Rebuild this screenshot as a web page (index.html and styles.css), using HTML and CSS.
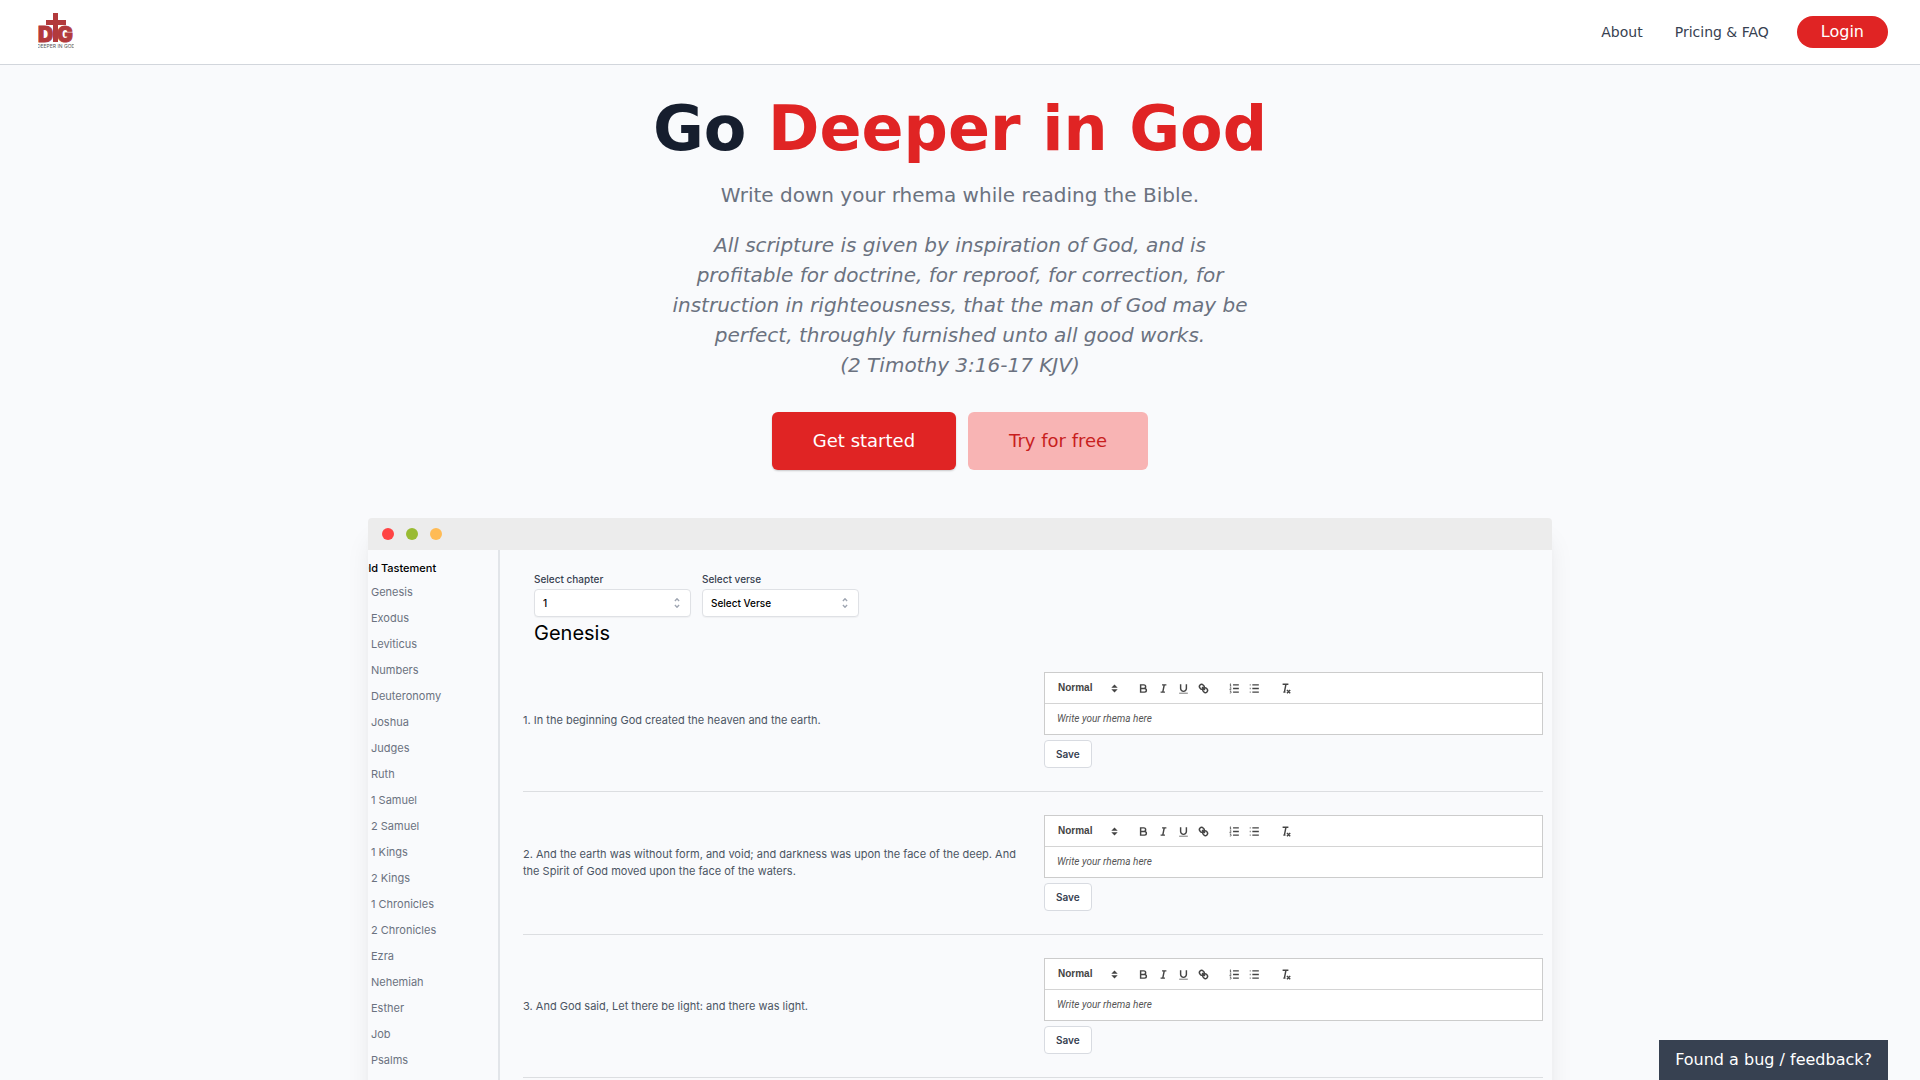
FILE: index.html
```html
<!DOCTYPE html>
<html lang="en">
<head>
<meta charset="utf-8">
<meta name="viewport" content="width=device-width, initial-scale=1">
<title>Deeper in God</title>
<link rel="stylesheet" href="styles.css">
</head>
<body>
<svg class="sprite" aria-hidden="true">
  <symbol id="i-bold" viewBox="0 0 18 18"><path d="M5 4h4.500a2.500 2.500 0 0 1 0 5H5zM5 9h5.500a2.500 2.500 0 0 1 0 5H5z"/></symbol>
  <symbol id="i-italic" viewBox="0 0 18 18"><path d="M7 4h6M5 14h6M8 14l2-10"/></symbol>
  <symbol id="i-underline" viewBox="0 0 18 18"><path d="M5 3v6c0 2 1.800 4 4 4s4-2 4-4V3"/><path d="M3 15.500h12" stroke-width="1"/></symbol>
  <symbol id="i-link" viewBox="0 0 18 18"><path d="M7 7l4 4"/><path d="M8.900 4.577a3.476 3.476 0 0 1 .360 4.679A3.476 3.476 0 0 1 4.577 8.900C3.185 7.500 2.035 6.400 4.217 4.217S7.500 3.185 8.900 4.577z"/><path d="M13.423 9.100a3.476 3.476 0 0 0-4.679-.360 3.476 3.476 0 0 0 .360 4.679c1.392 1.392 2.500 2.542 4.679.360S14.815 10.500 13.423 9.100z"/></symbol>
  <symbol id="i-ol" viewBox="0 0 18 18"><path d="M7 4h8M7 9h8M7 14h8"/><path stroke-width="1" d="M2.500 5.500h2M3.500 5.500v-3l-1 .600M2.500 8.200c.700-1 2-.600 1.800.200L2.500 10.500h2M2.500 12.500h1.800l-.800 1.200c1.500 0 1.300 1.800-1 1.600"/></symbol>
  <symbol id="i-ul" viewBox="0 0 18 18"><path d="M6 4h9M6 9h9M6 14h9M2.500 4h1M2.500 9h1M2.500 14h1"/></symbol>
  <symbol id="i-clean" viewBox="0 0 18 18"><path d="M5 3h8M6 14h3M9.500 3.500L7.500 14M11 11l4.500 4.500M15.500 11L11 15.500"/></symbol>
  <symbol id="i-sort" viewBox="0 0 18 18"><path class="solid" d="M7 11l2 2 2-2zM7 7l2-2 2 2z"/></symbol>
  <symbol id="i-chevrons" viewBox="0 0 20 20"><path d="M7 7l3-3 3 3M7 13l3 3 3-3"/></symbol>
</svg>

<header class="site-header">
  <a class="logo" href="#" aria-label="Deeper in God">
    <svg width="36" height="38" viewBox="0 0 36 38">
      <g class="logo-mark">
        <text x="0" y="31">D</text>
        <text x="19" y="31">G</text>
        <path d="M15 2h5v7h8v5h-8v17h-5V14H8V9h7z"/>
      </g>
      <text class="logo-name" x="18" y="37" text-anchor="middle">DEEPER IN GOD</text>
    </svg>
  </a>
  <nav class="site-nav">
    <a href="#">About</a>
    <a href="#">Pricing &amp; FAQ</a>
    <a class="login" href="#">Login</a>
  </nav>
</header>

<main>
  <section class="hero">
    <h1>Go <span>Deeper in God</span></h1>
    <p>Write down your rhema while reading the Bible.</p>
    <p class="scripture">All scripture is given by inspiration of God, and is profitable for doctrine, for reproof, for correction, for instruction in righteousness, that the man of God may be perfect, throughly furnished unto all good works.<br>(2 Timothy 3:16-17 KJV)</p>
    <div class="actions">
      <button class="btn btn-primary" type="button">Get started</button>
      <button class="btn btn-soft" type="button">Try for free</button>
    </div>
  </section>

  <section class="window">
    <div class="window-bar"><i class="dot red"></i><i class="dot green"></i><i class="dot amber"></i></div>
    <div class="app">
      <nav class="books">
        <h2>Old Tastement</h2>
        <a href="#">Genesis</a>
        <a href="#">Exodus</a>
        <a href="#">Leviticus</a>
        <a href="#">Numbers</a>
        <a href="#">Deuteronomy</a>
        <a href="#">Joshua</a>
        <a href="#">Judges</a>
        <a href="#">Ruth</a>
        <a href="#">1 Samuel</a>
        <a href="#">2 Samuel</a>
        <a href="#">1 Kings</a>
        <a href="#">2 Kings</a>
        <a href="#">1 Chronicles</a>
        <a href="#">2 Chronicles</a>
        <a href="#">Ezra</a>
        <a href="#">Nehemiah</a>
        <a href="#">Esther</a>
        <a href="#">Job</a>
        <a href="#">Psalms</a>
      </nav>
      <div class="reader">
        <div class="pickers">
          <div class="picker">
            <label for="chapter">Select chapter</label>
            <div class="select"><select id="chapter"><option>1</option></select><svg><use href="#i-chevrons"/></svg></div>
          </div>
          <div class="picker">
            <label for="verse">Select verse</label>
            <div class="select"><select id="verse"><option>Select Verse</option></select><svg><use href="#i-chevrons"/></svg></div>
          </div>
        </div>
        <h2 class="book-title">Genesis</h2>

        <article class="verse">
          <p>1. In the beginning God created the heaven and the earth.</p>
          <div class="note">
            <div class="editor">
              <div class="toolbar">
                <div class="format"><select aria-label="Text style"><option>Normal</option></select><svg><use href="#i-sort"/></svg></div>
                <div class="tools">
                  <button type="button" aria-label="Bold"><svg><use href="#i-bold"/></svg></button>
                  <button type="button" aria-label="Italic"><svg><use href="#i-italic"/></svg></button>
                  <button type="button" aria-label="Underline"><svg><use href="#i-underline"/></svg></button>
                  <button type="button" aria-label="Link"><svg><use href="#i-link"/></svg></button>
                </div>
                <div class="tools">
                  <button type="button" aria-label="Numbered list"><svg><use href="#i-ol"/></svg></button>
                  <button type="button" aria-label="Bulleted list"><svg><use href="#i-ul"/></svg></button>
                </div>
                <div class="tools">
                  <button type="button" aria-label="Clear formatting"><svg><use href="#i-clean"/></svg></button>
                </div>
              </div>
              <textarea rows="1" aria-label="Rhema for verse 1" placeholder="Write your rhema here"></textarea>
            </div>
            <button class="save" type="button">Save</button>
          </div>
        </article>

        <article class="verse">
          <p>2. And the earth was without form, and void; and darkness was upon the face of the deep. And the Spirit of God moved upon the face of the waters.</p>
          <div class="note">
            <div class="editor">
              <div class="toolbar">
                <div class="format"><select aria-label="Text style"><option>Normal</option></select><svg><use href="#i-sort"/></svg></div>
                <div class="tools">
                  <button type="button" aria-label="Bold"><svg><use href="#i-bold"/></svg></button>
                  <button type="button" aria-label="Italic"><svg><use href="#i-italic"/></svg></button>
                  <button type="button" aria-label="Underline"><svg><use href="#i-underline"/></svg></button>
                  <button type="button" aria-label="Link"><svg><use href="#i-link"/></svg></button>
                </div>
                <div class="tools">
                  <button type="button" aria-label="Numbered list"><svg><use href="#i-ol"/></svg></button>
                  <button type="button" aria-label="Bulleted list"><svg><use href="#i-ul"/></svg></button>
                </div>
                <div class="tools">
                  <button type="button" aria-label="Clear formatting"><svg><use href="#i-clean"/></svg></button>
                </div>
              </div>
              <textarea rows="1" aria-label="Rhema for verse 2" placeholder="Write your rhema here"></textarea>
            </div>
            <button class="save" type="button">Save</button>
          </div>
        </article>

        <article class="verse">
          <p>3. And God said, Let there be light: and there was light.</p>
          <div class="note">
            <div class="editor">
              <div class="toolbar">
                <div class="format"><select aria-label="Text style"><option>Normal</option></select><svg><use href="#i-sort"/></svg></div>
                <div class="tools">
                  <button type="button" aria-label="Bold"><svg><use href="#i-bold"/></svg></button>
                  <button type="button" aria-label="Italic"><svg><use href="#i-italic"/></svg></button>
                  <button type="button" aria-label="Underline"><svg><use href="#i-underline"/></svg></button>
                  <button type="button" aria-label="Link"><svg><use href="#i-link"/></svg></button>
                </div>
                <div class="tools">
                  <button type="button" aria-label="Numbered list"><svg><use href="#i-ol"/></svg></button>
                  <button type="button" aria-label="Bulleted list"><svg><use href="#i-ul"/></svg></button>
                </div>
                <div class="tools">
                  <button type="button" aria-label="Clear formatting"><svg><use href="#i-clean"/></svg></button>
                </div>
              </div>
              <textarea rows="1" aria-label="Rhema for verse 3" placeholder="Write your rhema here"></textarea>
            </div>
            <button class="save" type="button">Save</button>
          </div>
        </article>
      </div>
    </div>
  </section>
</main>

<button class="feedback" type="button">Found a bug / feedback?</button>
</body>
</html>
```
FILE: styles.css
```css
* { box-sizing: border-box; }
html { scrollbar-width: none; }
body { margin: 0; background: #f9fafc; color: #161e2e; font: 16px/24px "DejaVu Sans", sans-serif; }
h1, h2, p { margin: 0; }
a { color: inherit; text-decoration: none; }
button, select, textarea { font: inherit; color: inherit; margin: 0; }
button { cursor: pointer; }
.sprite { display: none; }

/* Header */
.site-header { display: flex; align-items: center; justify-content: space-between; padding: 0 32px; height: 65px; background: #fff; border-bottom: 1px solid #d2d6dc; }
.logo { display: flex; padding: 0 6px 4px; }
.logo-mark { fill: #b23a3c; font: 900 21px Inter, sans-serif; }
.logo-mark text { stroke: #b23a3c; stroke-width: 1; }
.logo-name { fill: #555; font: 400 5px Inter, sans-serif; }
.site-nav { display: flex; align-items: center; gap: 32px; font-size: 14px; color: #374151; }
.login { margin-left: -4px; padding: 4px 24px; border-radius: 16px; background: #e02424; color: #fff; font-size: 16px; }

/* Hero */
.hero { display: flex; flex-direction: column; align-items: center; gap: 20px; padding: 32px 16px 48px; text-align: center; color: #6b7280; font-size: 20px; line-height: 30px; }
.hero h1 { color: #161e2e; font-size: 62px; line-height: 63px; font-weight: 700; }
.hero h1 span { color: #e02424; }
.scripture { max-width: 580px; font-style: italic; }
.actions { display: flex; gap: 12px; padding-top: 12px; }
.btn { padding: 16px 40px; border: 1px solid transparent; border-radius: 6px; font-size: 18px; line-height: 24px; }
.btn-primary { background: #e02424; color: #fff; box-shadow: 0 1px 2px rgba(0, 0, 0, .2); }
.btn-soft { background: #f8b4b4; color: #c81e1e; }

/* Product window */
.window { max-width: 1184px; margin: 0 auto; border-radius: 4px 4px 0 0; overflow: hidden; box-shadow: 0 20px 25px -5px rgba(0, 0, 0, .1), 0 10px 10px -5px rgba(0, 0, 0, .04); background: #f9fafc; font-family: Inter, sans-serif; }
.window-bar { display: flex; align-items: center; gap: 12px; height: 32px; padding: 0 14px; background: #ececec; }
.dot { width: 12px; height: 12px; border-radius: 50%; }
.red { background: #ff4444; }
.green { background: #99bb33; }
.amber { background: #ffbb55; }
.app { display: flex; }

.books { flex: none; width: 132px; padding: 8px 0 0 3px; border-right: 2px solid #e2e5e9; overflow: hidden; font-size: 11px; color: #6b7280; }
.books h2 { margin-left: -11px; font-size: 11px; line-height: 21px; font-weight: 500; color: #000; white-space: nowrap; }
.books a { display: block; line-height: 26px; }

.reader { flex: 1; min-width: 0; padding: 21px 9px 24px 23px; }
.pickers { display: flex; gap: 11px; padding-left: 11px; }
.picker { display: flex; flex-direction: column; gap: 2px; width: 157px; font-size: 10px; line-height: 16px; font-weight: 500; color: #374151; }
.select, .format { display: grid; align-items: center; }
.select > *, .format > * { grid-area: 1 / 1; }
.select svg, .format svg { justify-self: end; pointer-events: none; }
.select select { appearance: none; width: 100%; height: 28px; padding: 0 8px; border: 1px solid #dfe1e5; border-radius: 4px; background: #fff; color: #000; box-shadow: 0 1px 1px rgba(0, 0, 0, .04); }
.select svg { width: 14px; height: 14px; margin-right: 7px; fill: none; stroke: #9fa6b2; stroke-width: 2; }
.book-title { padding-left: 11px; font-size: 20px; line-height: 32px; font-weight: 400; color: #000; }

.verse { display: grid; grid-template-columns: 1fr 1fr; align-items: center; gap: 22px; padding: 23px 0; border-bottom: 1px solid #dcdee1; font-size: 11px; line-height: 17px; color: #4b5563; }
.note { display: flex; flex-direction: column; align-items: flex-start; gap: 5px; }
.editor { width: 100%; border: 1px solid #ccc; background: #fff; }
.toolbar { display: flex; align-items: center; gap: 11px; height: 31px; padding: 0 6px; border-bottom: 1px solid #d4d4d4; color: #444; }
.format { width: 71px; }
.format select { appearance: none; width: 100%; padding: 0 7px; border: 0; background: none; font: 600 10px/16px "Liberation Sans", sans-serif; }
.tools { display: flex; }
.tools button { display: flex; justify-content: center; width: 20px; padding: 0; border: 0; background: none; }
.tools svg, .format svg { width: 13px; height: 13px; fill: none; stroke: #444; stroke-width: 2; }
.format svg { margin-right: 1px; }
.solid { fill: #444; }
.editor textarea { display: block; width: 100%; height: 30px; padding: 7px 12px; border: 0; outline: 0; resize: none; overflow: hidden; background: none; font: italic 10px/16px Roboto, "Liberation Sans", sans-serif; }
.editor textarea::placeholder { color: #555; }
.save { height: 28px; padding: 0 11px; border: 1px solid #d8dbe1; border-radius: 4px; background: #fff; color: #374151; font-size: 10px; line-height: 16px; font-weight: 600; }

.feedback { position: fixed; right: 32px; bottom: 0; padding: 8px 16px; border: 0; background: #374151; color: #fff; }
```
